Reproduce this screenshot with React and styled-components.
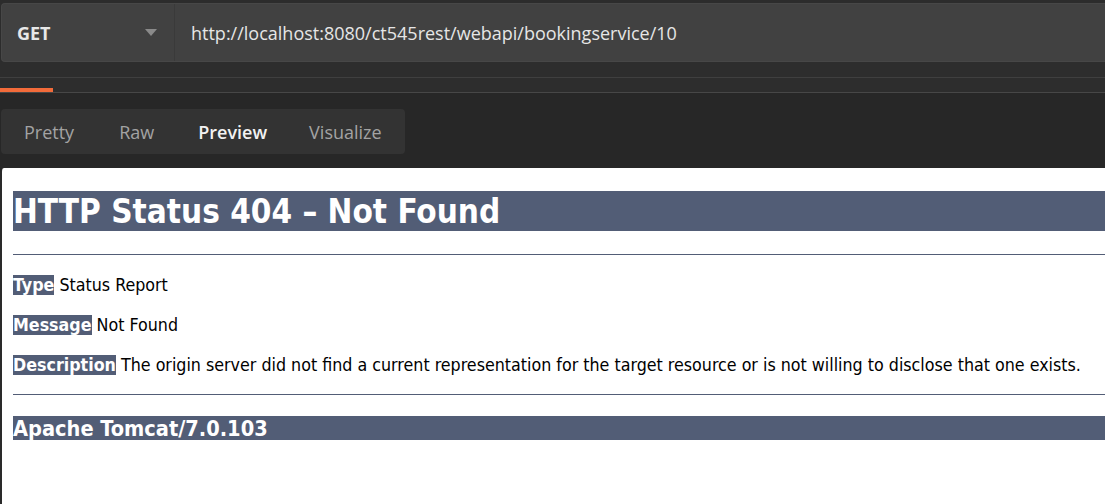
import React from 'react'
import styled, { createGlobalStyle } from 'styled-components'

const GlobalStyle = createGlobalStyle`
  html, body {
    margin: 0;
    padding: 0;
    background: #272727;
    overflow: hidden;
  }
`

const Page = styled.div`
  width: 1105px;
  height: 504px;
  display: flex;
  flex-direction: column;
  font-family: "Open Sans", "Noto Sans", sans-serif;
`

const TopArea = styled.div`
  background: #2c2c2c;
  padding: 3px 0 0 1px;
`

const RequestBar = styled.div`
  display: flex;
  height: 57px;
  background: #414141;
  border: 1px solid #474747;
  border-right: none;
  border-radius: 4px 0 0 4px;
`

const MethodSelect = styled.div`
  padding: 0 17px 0 15px;
  box-sizing: border-box;
  width: 173px;
  display: flex;
  align-items: center;
  justify-content: space-between;
  border-right: 1px solid #3a3a3a;
  color: #e8e8e8;
  font-weight: 700;
  font-size: 18px;
`

const Caret = styled.span`
  width: 0;
  height: 0;
  border-left: 6px solid transparent;
  border-right: 6px solid transparent;
  border-top: 7px solid #8a8a8a;
`

const UrlField = styled.div`
  flex: 1;
  display: flex;
  align-items: center;
  padding-left: 16px;
  color: #e6e6e6;
  font-size: 18px;
`

const ResponseHead = styled.div`
  background: #2d2d2d;
  height: 31px;
  display: flex;
  flex-direction: column;
  justify-content: flex-end;
`

const TabStrip = styled.div`
  height: 14px;
  border-top: 1px solid #3f3f3f;
  border-bottom: 1px solid #474747;
  display: flex;
  align-items: flex-end;
`

const ActiveMark = styled.div`
  width: 53px;
  height: 4px;
  background: #f26b3a;
`

const ModeRow = styled.div`
  padding: 16px 0 14px 1px;
  display: flex;
`

const ModeTabs = styled.div`
  display: flex;
  align-items: center;
  height: 45px;
  width: 404px;
  background: #333333;
  border-radius: 4px;
  padding-left: 23px;
  box-sizing: border-box;
`

const ModeTab = styled.span`
  font-size: 18px;
  color: ${p => (p.$active ? '#f2f2f2' : '#a3a3a3')};
  font-weight: ${p => (p.$active ? 600 : 400)};
  margin-right: ${p => p.$gap}px;
`

const Preview = styled.div`
  flex: 1;
  background: #ffffff;
  border-left: 2px solid #2a2a2a;
  border-top-left-radius: 4px;
  padding: 23px 0 0 11px;
  font-family: "DejaVu Sans Condensed", "DejaVu Sans", Tahoma, sans-serif;
  color: #000;
`

const Heading = styled.h1`
  margin: 0;
  height: 40px;
  line-height: 42px;
  background: #525d76;
  color: #fff;
  font-size: 33px;
  font-weight: 700;
`

const Rule = styled.div`
  height: 1px;
  background: #525d76;
  margin: ${p => p.$top}px 0 0 0;
`

const Para = styled.p`
  margin: ${p => p.$top}px 0 0 0;
  font-size: 17.7px;
  line-height: 22px;
  white-space: nowrap;
`

const Label = styled.b`
  background: #525d76;
  color: #fff;
  font-weight: 700;
`

const Footer = styled.h3`
  margin: 21px 0 0 0;
  height: 24px;
  line-height: 25px;
  background: #525d76;
  color: #fff;
  font-size: 21.6px;
  font-weight: 700;
`

const tabs = [
  { name: 'Pretty', gap: 45 },
  { name: 'Raw', gap: 44 },
  { name: 'Preview', gap: 42, active: true },
  { name: 'Visualize', gap: 0 },
]

const App = () => {
  return (
    <Page>
      <GlobalStyle />
      <TopArea>
        <RequestBar>
          <MethodSelect>
            GET
            <Caret />
          </MethodSelect>
          <UrlField>http://localhost:8080/ct545rest/webapi/bookingservice/10</UrlField>
        </RequestBar>
      </TopArea>
      <ResponseHead>
        <TabStrip>
          <ActiveMark />
        </TabStrip>
      </ResponseHead>
      <ModeRow>
        <ModeTabs>
          {tabs.map(t => (
            <ModeTab key={t.name} $active={t.active} $gap={t.gap}>
              {t.name}
            </ModeTab>
          ))}
        </ModeTabs>
      </ModeRow>
      <Preview>
        <Heading>HTTP Status 404 – Not Found</Heading>
        <Rule $top={23} />
        <Para $top={19}>
          <Label>Type</Label> Status Report
        </Para>
        <Para $top={18}>
          <Label>Message</Label> Not Found
        </Para>
        <Para $top={18}>
          <Label>Description</Label> The origin server did not find a current representation for the target resource or is not willing to disclose that one exists.
        </Para>
        <Rule $top={18} />
        <Footer>Apache Tomcat/7.0.103</Footer>
      </Preview>
    </Page>
  )
}

export default App
